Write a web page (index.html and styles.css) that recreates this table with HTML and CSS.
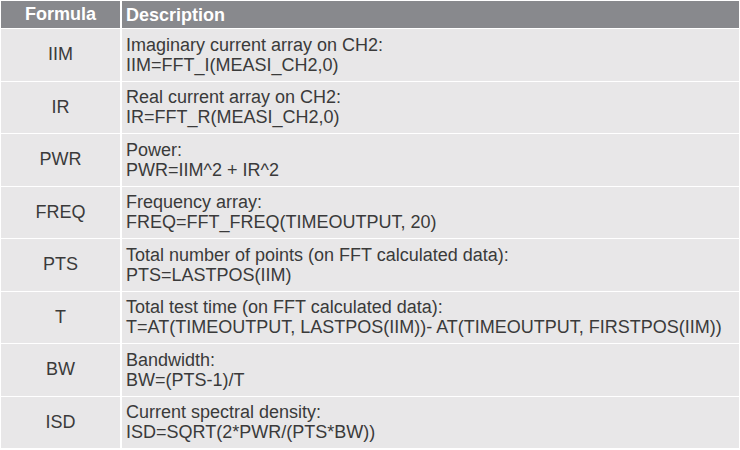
FILE: index.html
```html
<!DOCTYPE html>
<html>
<head>
<meta charset="utf-8">
<link rel="stylesheet" href="styles.css">
</head>
<body>
<div class="table">
  <div class="row head">
    <div class="c1">Formula</div>
    <div class="c2">Description</div>
  </div>
  <div class="row">
    <div class="c1">IIM</div>
    <div class="c2">Imaginary current array on CH2:<br>IIM=FFT_I(MEASI_CH2,0)</div>
  </div>
  <div class="row">
    <div class="c1">IR</div>
    <div class="c2">Real current array on CH2:<br>IR=FFT_R(MEASI_CH2,0)</div>
  </div>
  <div class="row">
    <div class="c1">PWR</div>
    <div class="c2">Power:<br>PWR=IIM^2 + IR^2</div>
  </div>
  <div class="row">
    <div class="c1">FREQ</div>
    <div class="c2">Frequency array:<br>FREQ=FFT_FREQ(TIMEOUTPUT, 20)</div>
  </div>
  <div class="row">
    <div class="c1">PTS</div>
    <div class="c2">Total number of points (on FFT calculated data):<br>PTS=LASTPOS(IIM)</div>
  </div>
  <div class="row">
    <div class="c1">T</div>
    <div class="c2">Total test time (on FFT calculated data):<br>T=AT(TIMEOUTPUT, LASTPOS(IIM))- AT(TIMEOUTPUT, FIRSTPOS(IIM))</div>
  </div>
  <div class="row">
    <div class="c1">BW</div>
    <div class="c2">Bandwidth:<br>BW=(PTS-1)/T</div>
  </div>
  <div class="row">
    <div class="c1">ISD</div>
    <div class="c2">Current spectral density:<br>ISD=SQRT(2*PWR/(PTS*BW))</div>
  </div>
</div>
</body>
</html>
```
FILE: styles.css
```css
html, body {
  margin: 0;
  padding: 0;
  background: #ffffff;
}
body {
  font-family: "Liberation Sans", Arial, sans-serif;
  color: #3a3a3a;
}
.table {
  width: 738px;
  padding: 1px 0 0 1px;
  display: flex;
  flex-direction: column;
  gap: 1px;
}
.row {
  display: grid;
  grid-template-columns: 119px 1fr;
  column-gap: 2px;
  height: 51.5px;
}
.row > div {
  background: #e8e7e8;
  display: flex;
  align-items: center;
}
.head {
  height: 27px;
}
.head > div {
  background: #88898d;
  color: #ffffff;
  font-weight: bold;
  font-size: 18px;
}
.c1 {
  justify-content: center;
  font-size: 18px;
}
.c2 {
  padding-left: 4px;
  font-size: 18px;
  line-height: 20px;
}
.head .c2 {
  justify-content: flex-start;
}
```
